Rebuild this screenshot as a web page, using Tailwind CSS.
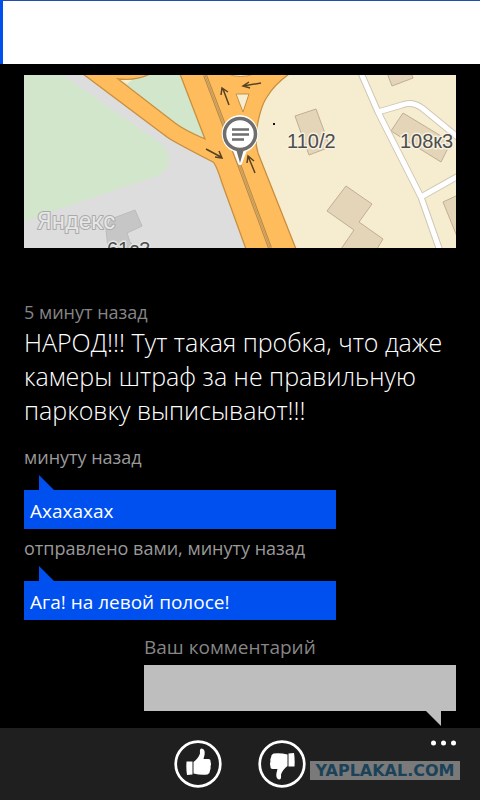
<!DOCTYPE html>
<html lang="ru">
  <head>
    <meta charset="UTF-8" />
    <meta name="viewport" content="width=device-width, initial-scale=1.0" />
    <title>Комментарии</title>
    <script src="https://cdn.jsdelivr.net/npm/@tailwindcss/browser@4"></script>
  </head>

  <body
    class="bg-black text-white min-h-screen flex flex-col font-['Open_Sans','Noto_Sans',sans-serif]"
  >
    <header
      class="h-16 shrink-0 bg-white border-l-3 border-l-[#0050ef] border-t border-t-[#1f4fb0]"
    ></header>

    <main class="flex-1 px-6 pt-[11px]">
      <svg
        class="block w-full h-[173px]"
        viewBox="0 0 432 173"
        preserveAspectRatio="xMidYMid slice"
        role="img"
        aria-label="Карта"
      >
        <rect width="432" height="173" fill="#f6edd1" />
        <path d="M0 0H160L240 173H0Z" fill="#dddddd" />
        <path
          d="M0 0H39L136 68Q148 77 144 90Q142 97 130 102L76 120L26 137L0 147Z"
          fill="#d1e6cb"
        />
        <path
          d="M87 144L111 135L118 151L103 158L106 167L112 173H84L82 155Z"
          fill="#c6c6c6"
          stroke="#bcbcbc"
        />

        <!-- main road -->
        <path
          d="M59 -1L143 62Q150 67 189 87Q192 89 198 108L222 174H272L234 78Q231 68 232 58Q236 32 243 22Q250 10 265 -1Z"
          fill="#ffbc5c"
          stroke="#c98f3f"
          stroke-width="1.3"
        />
        <path
          d="M94 4Q112 6 126 -1H156L181 64Q160 55 151 48Z"
          fill="#d1e6cb"
          stroke="#c98f3f"
          stroke-width="1.3"
        />
        <path d="M97 5L103 9L108 5Z" fill="#f8efcf" />
        <path d="M204 -1Q216 4 230 -1Z" fill="#f6edd1" stroke="#c98f3f" />
        <path d="M212 19H225L219 37Z" fill="#f6edd1" stroke="#c98f3f" />
        <g fill="none">
          <path d="M181 0L216 92L246 173" stroke="#b58a4a" stroke-width="4" />
          <path d="M181 0L216 92L246 173" stroke="#e8b566" stroke-width="2" />
          <path d="M181 0L216 92L246 173" stroke="#a9834c" stroke-width="0.6" />
        </g>

        <!-- buildings -->
        <g fill="#e5d5b8" stroke="#bfae94" stroke-width="1">
          <path d="M271 41L292 34L306 72L285 80Z" />
          <path d="M379 38L427 67L417 87L367 56Z" />
          <path d="M363 -2L368 11L389 3L387 -2Z" />
          <path
            d="M322 111L348 129L335 147L359 164L353 174H317L330 155L303 136Z"
          />
          <path d="M419 127L434 120V164Z" />
        </g>

        <!-- side streets -->
        <g fill="none" stroke-linejoin="round">
          <path
            d="M337 -2L354 37L397 122L416 176M354 37L378 30Q388 26 398 33L436 64M397 122L436 100"
            stroke="#cfc7b4"
            stroke-width="7"
          />
          <path
            d="M337 -2L354 37L397 122L416 176M354 37L378 30Q388 26 398 33L436 64M397 122L436 100"
            stroke="#ffffff"
            stroke-width="5"
          />
        </g>

        <!-- traffic arrows -->
        <g fill="none" stroke="#554325" stroke-width="1.5">
          <path d="M205 30L199 14M197 20L198 13L204 17" />
          <path d="M237 8L219 11M225 7L219 11L226 13" />
          <path d="M182 74L197 82M191 82L198 83L195 76" />
          <path d="M231 98L224 81M223 88L224 81L230 86" />
        </g>
        <rect x="249" y="48" width="2" height="2" fill="#111111" />

        <g
          class="font-['Liberation_Sans',sans-serif] text-[20px]"
          fill="#4d4d4d"
          stroke="#f7f1e0"
          stroke-width="3"
          stroke-linejoin="round"
          paint-order="stroke"
        >
          <text x="263" y="73">110/2</text>
          <text x="376" y="73">108к3</text>
          <text x="83" y="181" stroke="#e6e6e6">61с3</text>
        </g>
        <text
          x="13"
          y="154"
          class="font-['Roboto','Liberation_Sans',sans-serif] text-[23px]"
          fill="#e6e6e6"
          stroke="#aaaaaa"
          stroke-width="2"
          stroke-linejoin="round"
          paint-order="stroke"
        >
          Яндекс
        </text>

        <!-- comment pin -->
        <path
          d="M216 42A17 17 0 0 1 221 75L216 88L211 75A17 17 0 0 1 216 42Z"
          fill="#ffffff"
          stroke="#ffffff"
          stroke-width="4"
          stroke-linejoin="round"
        />
        <path d="M212 74H220L216 88Z" fill="#6e6e6e" />
        <circle cx="216" cy="59" r="15.5" fill="#fff" stroke="#6e6e6e" stroke-width="3.5" />
        <path
          d="M208 54.5H225M208 59.5H225M208 64.5H220"
          stroke="#6e6e6e"
          stroke-width="2.5"
        />
      </svg>

      <article class="mt-[51px]">
        <p class="text-[18px] leading-[26px] text-[#868686]">5 минут назад</p>
        <p class="text-[25px] leading-[34px] font-light">
          НАРОД!!! Тут такая пробка, что даже камеры штраф за не правильную
          парковку выписывают!!!
        </p>
      </article>

      <ul class="mt-[18px] flex flex-col gap-[7px]">
        <li>
          <p class="text-[18px] leading-6 text-[#9a9a9a]">минуту назад</p>
          <svg class="block mt-[6px] ml-[15px] w-[15px] h-[15px]" viewBox="0 0 15 15">
            <path d="M0 0L15 15H0Z" fill="#0050ef" />
          </svg>
          <p class="w-13/18 bg-[#0050ef] px-[6px] pt-[9px] pb-[6px] text-[19px] leading-6">
            Ахахахах
          </p>
        </li>
        <li>
          <p class="text-[18px] leading-6 text-[#9a9a9a]">
            отправлено вами, минуту назад
          </p>
          <svg class="block mt-[6px] ml-[15px] w-[15px] h-[15px]" viewBox="0 0 15 15">
            <path d="M0 0L15 15H0Z" fill="#0050ef" />
          </svg>
          <p class="w-13/18 bg-[#0050ef] px-[6px] pt-[9px] pb-[6px] text-[19px] leading-6">
            Ага! на левой полосе!
          </p>
        </li>
      </ul>

      <form class="mt-[15px] ml-auto w-13/18 flex flex-col">
        <label for="comment" class="text-[19px] leading-6 text-[#868686]"
          >Ваш комментарий</label
        >
        <textarea
          id="comment"
          rows="1"
          class="mt-[6px] h-[46px] w-full resize-none bg-[#bebebe] px-2 py-2 text-[19px] text-black outline-none"
        ></textarea>
        <svg class="self-end mr-[15px] mb-[2px] w-[15px] h-[15px]" viewBox="0 0 15 15">
          <path d="M0 0H15V15Z" fill="#bebebe" />
        </svg>
      </form>
    </main>

    <footer class="relative h-[72px] shrink-0 bg-[#1f1f1f] flex justify-center gap-9 pt-3">
      <button type="button" aria-label="Нравится" class="size-12">
        <svg viewBox="0 0 48 48" fill="#fff">
          <circle cx="24" cy="24" r="22.3" fill="none" stroke="#fff" stroke-width="2.7" />
          <g id="thumb">
            <path d="M12.5 21.500H18.500V34.500L13 35Q12 29 12.500 21.500Z" />
            <path
              d="M19.500 22Q24 19 26 13.500Q25.500 8.500 27.500 8.500Q31.500 9 30.500 15L29.500 19H34.500Q37 19 36.500 22Q37.500 23.500 36.500 26.500Q37 28.500 36 30.500Q36 33.500 33.500 34.500Q27 35.500 19.500 33.500Z"
            />
          </g>
        </svg>
      </button>
      <button type="button" aria-label="Не нравится" class="size-12">
        <svg viewBox="0 0 48 48" fill="#fff">
          <circle cx="24" cy="24" r="22.3" fill="none" stroke="#fff" stroke-width="2.7" />
          <use href="#thumb" transform="rotate(180 24.5 24)" />
        </svg>
      </button>
      <button type="button" aria-label="Ещё" class="absolute right-6 top-3">
        <svg class="w-[25px] h-[6px]" viewBox="0 0 25 6" fill="#fff">
          <circle cx="2.5" cy="3" r="2.5" />
          <circle cx="12.5" cy="3" r="2.5" />
          <circle cx="22.5" cy="3" r="2.5" />
        </svg>
      </button>
      <span
        class="absolute right-5 top-[33px] w-[150px] h-[19px] bg-[#7a7a7a] text-[#1b4258] text-center text-[16px] leading-[19px] font-bold font-['DejaVu_Sans',sans-serif]"
        >YAPLAKAL.COM</span
      >
    </footer>
  </body>
</html>
